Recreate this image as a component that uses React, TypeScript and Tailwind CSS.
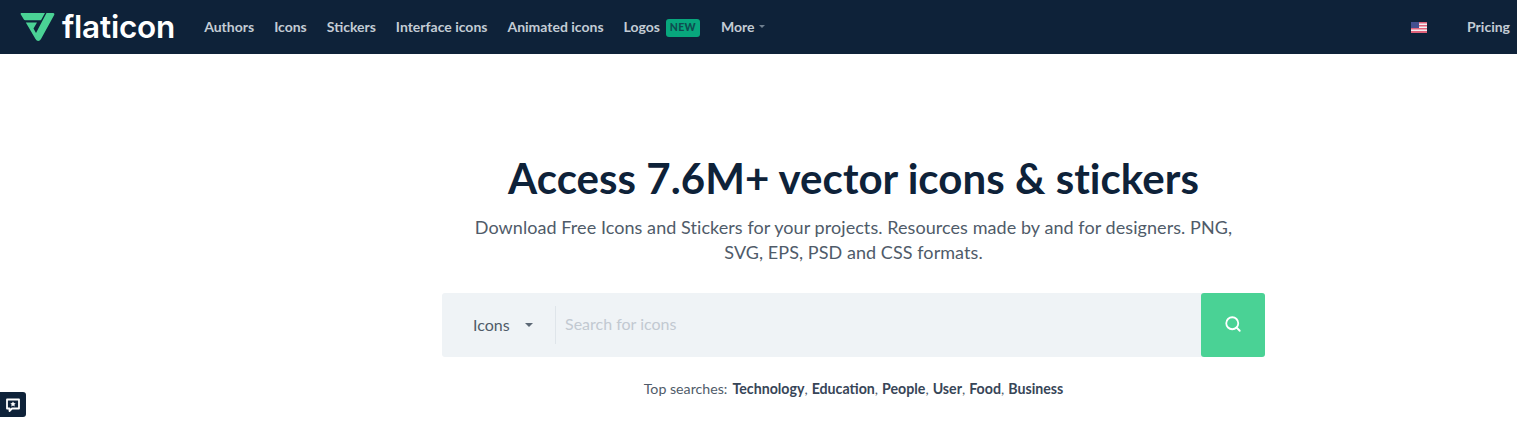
import { Search } from "lucide-react";

const navItems = ["Authors", "Icons", "Stickers", "Interface icons", "Animated icons"];
const topSearches = ["Technology", "Education", "People", "User", "Food", "Business"];

function Logo() {
  return (
    <svg width="36" height="30" viewBox="0 0 36 30" className="shrink-0">
      <path d="M1.5 1H25L21 8.2H5.2C4.6 8.2 4.2 8 3.9 7.5L0.8 2.4C0.4 1.7 0.7 1 1.5 1Z" fill="#4ad295" />
      <path d="M5.8 10.5H17L13.5 16.5L16 21L26.5 1H33.2C34.3 1 34.7 2 34.2 3L21 27C19.5 29.6 17 29.6 15.5 27Z" fill="#4ad295" />
    </svg>
  );
}

function Flag() {
  return (
    <svg width="16" height="11" viewBox="0 0 16 11" className="shrink-0">
      <rect width="16" height="11" fill="#f4f0f4" />
      <rect y="0" width="16" height="1.5" fill="#e0627a" />
      <rect y="3" width="16" height="1.5" fill="#e0627a" />
      <rect y="6" width="16" height="1.5" fill="#e0627a" />
      <rect y="9" width="16" height="2" fill="#e0627a" />
      <rect width="8" height="6" fill="#44508f" />
    </svg>
  );
}

export default function App() {
  return (
    <div className="h-[435px] overflow-hidden bg-white font-['Lato',sans-serif] text-[#0e2239] relative">
      <header className="flex h-[54px] items-center bg-[#0e2239] pl-5 pr-[7px]">
        <Logo />
        <span className="ml-[6px] mr-[29px] text-[31.5px] leading-none font-semibold tracking-[-0.2px] text-white font-['Inter',sans-serif]">flaticon</span>
        <nav className="flex items-center gap-5 pb-[2px] text-[14px] font-bold text-[#c3ccd5]">
          {navItems.map((item) => (
            <a key={item}>{item}</a>
          ))}
          <a className="flex items-center gap-[6px]">
            Logos
            <span className="flex h-[18px] w-[34px] translate-y-[2px] items-center justify-center rounded-[3px] bg-[#08a77d] text-[10.5px] font-black tracking-[0.3px] text-[#0e4d50]">NEW</span>
          </a>
          <a className="ml-[1px] flex items-center gap-[4px]">
            More
            <span className="mt-[1px] h-0 w-0 border-x-[3.5px] border-t-[3.5px] border-x-transparent border-t-[#6f7f8f]" />
          </a>
        </nav>
        <div className="ml-auto flex items-center gap-[40px] text-[14px] font-bold text-[#c3ccd5]">
          <Flag />
          <a className="pb-[2px]">Pricing</a>
        </div>
      </header>

      <main className="ml-[442px] flex w-[823px] flex-col items-center pt-[99px]">
        <h1 className="text-[42px] leading-[50px] font-bold tracking-[0.05px] text-[#0e2239]">Access 7.6M+ vector icons &amp; stickers</h1>
        <p className="mt-[12px] w-[780px] text-center text-[18px] leading-[25px] tracking-[0.065px] text-[#4f5b69]">
          Download Free Icons and Stickers for your projects. Resources made by and for designers. PNG, SVG, EPS, PSD and CSS formats.
        </p>
        <div className="mt-[28px] flex h-[64px] w-full items-stretch rounded-[3px] bg-[#eff3f6]">
          <div className="flex w-[113px] items-center pl-[31px] text-[16px] text-[#4f5b69]">
            Icons
            <span className="ml-[15px] mt-[-1px] h-0 w-0 border-x-[4px] border-t-[4px] border-x-transparent border-t-[#5c6875]" />
          </div>
          <div className="my-[13px] w-px bg-[#dfe5ea]" />
          <div className="flex flex-1 items-center pb-[3px] pl-[9px] text-[16px] text-[#c2c9d1]">Search for icons</div>
          <button className="flex w-[64px] items-center justify-center rounded-[3px] bg-[#4ad295] pb-[2px] text-white">
            <Search size={18} strokeWidth={2.4} />
          </button>
        </div>
        <div className="mt-[21px] flex items-center text-[14.2px] text-[#4f5b69]">
          <span className="mr-[5px]">Top searches:</span>
          {topSearches.map((s, i) => (
            <span key={s}>
              <a className="font-bold text-[#374557]">{s}</a>
              {i < topSearches.length - 1 && <span className="mr-[4px]">,</span>}
            </span>
          ))}
        </div>
      </main>

      <button className="absolute bottom-[18px] left-0 flex h-[25px] w-[26px] items-center justify-center rounded-r-[3px] bg-[#0e2239]">
        <svg width="16" height="16" viewBox="0 0 16 16" fill="none">
          <path d="M2 2.5H14V11.5H7L4.5 14V11.5H2Z" stroke="white" strokeWidth="1.8" strokeLinejoin="round" />
          <path d="M8 4.4L8.9 6.1L10.7 6.4L9.4 7.6L9.7 9.4L8 8.5L6.3 9.4L6.6 7.6L5.3 6.4L7.1 6.1Z" fill="white" />
        </svg>
      </button>
    </div>
  );
}
